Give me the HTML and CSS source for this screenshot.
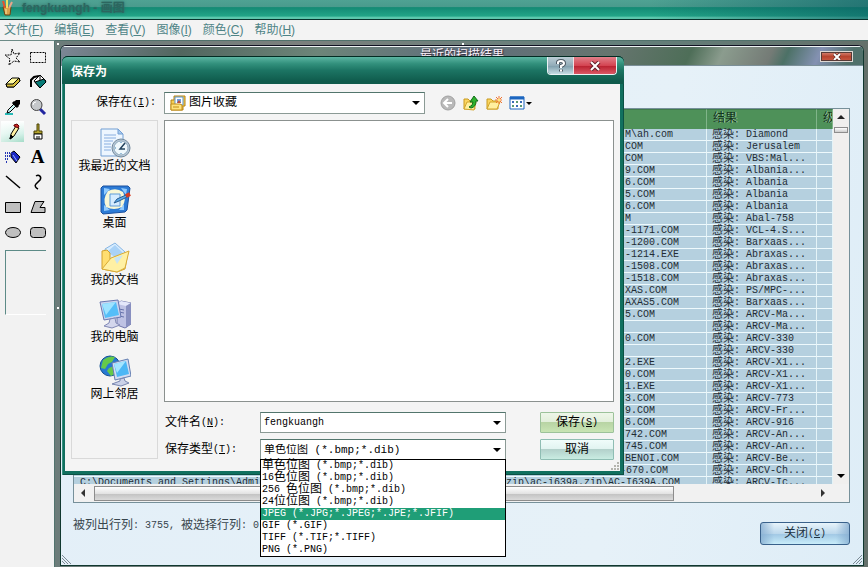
FILE: index.html
```html
<!DOCTYPE html>
<html lang="zh-CN">
<head>
<meta charset="utf-8">
<title>fengkuangh - 画图</title>
<link rel="stylesheet" href="styles.css">
</head>
<body>
<div class="app">
  <header class="app-title">
    <svg width="15" height="16" viewBox="0 0 15 16"><path d="M3 7h8l-1 8H5z" fill="#d9a24a" stroke="#6c4512"/><path d="M5 8L3 1" stroke="#e8502a" stroke-width="2"/><path d="M7 8V0" stroke="#f0e060" stroke-width="2"/><path d="M9 8l3-6" stroke="#e9a58a" stroke-width="2"/><path d="M6 9v5" stroke="#fbe4a0"/></svg>
    <span>fengkuangh - 画图</span>
  </header>
  <nav class="menubar">
    <a href="#">文件(<u>F</u>)</a><a href="#">编辑(<u>E</u>)</a><a href="#">查看(<u>V</u>)</a><a href="#">图像(<u>I</u>)</a><a href="#">颜色(<u>C</u>)</a><a href="#">帮助(<u>H</u>)</a>
  </nav>
  <div class="workspace">
    <aside class="toolbox">
      <div class="tools">
        <button aria-label="任意形状裁剪"><svg viewBox="0 0 18 18"><path d="M8 1l2 5 6-1-4 5 4 4-6-1-5 4 1-6-5-4h6z" fill="none" stroke="#000" stroke-dasharray="2 1"/></svg></button>
        <button aria-label="选定"><svg viewBox="0 0 18 18"><path d="M1.500 4.500h15v10h-15z" fill="none" stroke="#000" stroke-dasharray="2 1"/></svg></button>
        <button aria-label="橡皮"><svg viewBox="0 0 18 18"><path d="M2 11l6-6h7l1 3-6 6H3z" fill="#fff9a0" stroke="#000"/><path d="M2 11h7l6-6 1 3-6 6H3z" fill="#d6bd3c" stroke="#000"/></svg></button>
        <button aria-label="填充"><svg viewBox="0 0 18 18"><path d="M2 14V7l3-3 5-1" fill="none" stroke="#000" stroke-width="2"/><path d="M5 8l6-6 6 6-6 7z" fill="#fff" stroke="#000"/><path d="M6 9l9-3 2 3-6 6z" fill="#087c78" stroke="#000"/><path d="M11 2v5" stroke="#000"/></svg></button>
        <button aria-label="取色"><svg viewBox="0 0 18 18"><path d="M1 16h8" stroke="#26b9b6" stroke-width="2"/><path d="M3 15l1-3 6-6 2 2-6 6z" fill="#c9f4f3" stroke="#000"/><path d="M9 4l5 5M11 7l3-4" stroke="#000" stroke-width="3"/><path d="M12 2h4v4l-2 2-4-4z"/></svg></button>
        <button aria-label="放大镜"><svg viewBox="0 0 18 18"><path d="M11 11l5 5" stroke="#2226a0" stroke-width="3"/><circle cx="7.500" cy="7" r="5.500" fill="#c5c8ca" stroke="#444"/><path d="M4 7q0-3 3-3" fill="none" stroke="#fff"/></svg></button>
        <button class="active" aria-label="铅笔" aria-pressed="true"><svg viewBox="0 0 18 18"><path d="M6 16l1-5 5-8 3 2-5 8z" fill="#fff0a0" stroke="#000"/><path d="M10 2l3-1 2 2-1 2-4-2z" fill="#c72a2a" stroke="#600"/><path d="M6 16l1-4 2 2z" stroke="#000"/></svg></button>
        <button aria-label="刷子"><svg viewBox="0 0 18 18"><path d="M8 1h2v7h3v3H5V8h3z" fill="#b3a32d" stroke="#4a4308"/><path d="M5 11h8v5H5z" fill="#fff" stroke="#000"/><path d="M8 13v3M10 13v3" stroke="#000"/></svg></button>
        <button aria-label="喷枪"><svg viewBox="0 0 18 18"><path d="M7 5l3-2 6 6-4 6-5-6z" fill="#1b28c4" stroke="#000"/><path d="M9 7l4 6" stroke="#9bb4ff"/><path d="M1 5h7M1 8h5M1 11h3M2 14h2" stroke="#2535b4" stroke-width="2" stroke-dasharray="1 1"/></svg></button>
        <button class="letter" aria-label="文字">A</button>
        <button aria-label="直线"><svg viewBox="0 0 18 18"><path d="M2 3l14 12" stroke="#000" stroke-width="1.500"/></svg></button>
        <button aria-label="曲线"><svg viewBox="0 0 18 18"><path d="M7 3c3-2 6 1 4 4L7 11c-2 2 0 4 2 5" fill="none" stroke="#000" stroke-width="1.500"/></svg></button>
        <button aria-label="矩形"><svg viewBox="0 0 18 18"><path d="M1.500 4.500h15v10h-15z" fill="#bfbfbf" stroke="#000"/></svg></button>
        <button aria-label="多边形"><svg viewBox="0 0 18 18"><path d="M6 3.500h9l-4 6h5v5H2z" fill="#bfbfbf" stroke="#000"/></svg></button>
        <button aria-label="椭圆"><svg viewBox="0 0 18 18"><ellipse cx="9" cy="9.500" rx="7.500" ry="5" fill="#bfbfbf" stroke="#000"/></svg></button>
        <button aria-label="圆角矩形"><svg viewBox="0 0 18 18"><rect x="1.500" y="4.500" width="15" height="10" rx="3" fill="#bfbfbf" stroke="#000"/></svg></button>
      </div>
      <div class="tool-options"></div>
    </aside>

    <main class="canvas">
      <i class="handle h-corner"></i><i class="handle h-top"></i><i class="handle h-left"></i>

      <section class="scan">
        <header class="scan-title"><h2>最近的扫描结果</h2><button class="scan-x" aria-label="关闭"><svg width="8" height="8" viewBox="0 0 8 8"><path d="M1 1l6 6M7 1L1 7" stroke="#3b1212" stroke-width="3"/><path d="M1 1l6 6M7 1L1 7" stroke="#fff" stroke-width="2"/></svg></button></header>
        <div class="scan-body">
          <div class="listbox">
            <div class="rows">
              <table>
                <colgroup><col><col class="c-tail"><col class="c-result"><col class="c-level"></colgroup>
                <thead><tr><th colspan="2"></th><th>结果</th><th>级</th></tr></thead>
                <tbody>
                  <tr><td></td><td>M\ah.com</td><td><b>感染</b>: Diamond</td><td></td></tr>
                  <tr><td></td><td>COM</td><td><b>感染</b>: Jerusalem</td><td></td></tr>
                  <tr><td></td><td>COM</td><td><b>感染</b>: VBS:Mal...</td><td></td></tr>
                  <tr><td></td><td>9.COM</td><td><b>感染</b>: Albania...</td><td></td></tr>
                  <tr><td></td><td>6.COM</td><td><b>感染</b>: Albania</td><td></td></tr>
                  <tr><td></td><td>5.COM</td><td><b>感染</b>: Albania</td><td></td></tr>
                  <tr><td></td><td>6.COM</td><td><b>感染</b>: Albania</td><td></td></tr>
                  <tr><td></td><td>M</td><td><b>感染</b>: Abal-758</td><td></td></tr>
                  <tr><td></td><td>-1171.COM</td><td><b>感染</b>: VCL-4.S...</td><td></td></tr>
                  <tr><td></td><td>-1200.COM</td><td><b>感染</b>: Barxaas...</td><td></td></tr>
                  <tr><td></td><td>-1214.EXE</td><td><b>感染</b>: Abraxas...</td><td></td></tr>
                  <tr><td></td><td>-1508.COM</td><td><b>感染</b>: Abraxas...</td><td></td></tr>
                  <tr><td></td><td>-1518.COM</td><td><b>感染</b>: Abraxas...</td><td></td></tr>
                  <tr><td></td><td>XAS.COM</td><td><b>感染</b>: PS/MPC-...</td><td></td></tr>
                  <tr><td></td><td>AXAS5.COM</td><td><b>感染</b>: Barxaas...</td><td></td></tr>
                  <tr><td></td><td>5.COM</td><td><b>感染</b>: ARCV-Ma...</td><td></td></tr>
                  <tr><td></td><td></td><td><b>感染</b>: ARCV-Ma...</td><td></td></tr>
                  <tr><td></td><td>0.COM</td><td><b>感染</b>: ARCV-330</td><td></td></tr>
                  <tr><td></td><td></td><td><b>感染</b>: ARCV-330</td><td></td></tr>
                  <tr><td></td><td>2.EXE</td><td><b>感染</b>: ARCV-X1...</td><td></td></tr>
                  <tr><td></td><td>0.COM</td><td><b>感染</b>: ARCV-X1...</td><td></td></tr>
                  <tr><td></td><td>1.EXE</td><td><b>感染</b>: ARCV-X1...</td><td></td></tr>
                  <tr><td></td><td>3.COM</td><td><b>感染</b>: ARCV-773</td><td></td></tr>
                  <tr><td></td><td>9.COM</td><td><b>感染</b>: ARCV-Fr...</td><td></td></tr>
                  <tr><td></td><td>6.COM</td><td><b>感染</b>: ARCV-916</td><td></td></tr>
                  <tr><td></td><td>742.COM</td><td><b>感染</b>: ARCV-An...</td><td></td></tr>
                  <tr><td></td><td>745.COM</td><td><b>感染</b>: ARCV-An...</td><td></td></tr>
                  <tr><td></td><td>BENOI.COM</td><td><b>感染</b>: ARCV-Be...</td><td></td></tr>
                  <tr><td colspan="2">C:\Documents and Settings\Administrator\My Documents\samples\virus\arc\zip\ac-670.zip\ARCV-670.COM</td><td><b>感染</b>: ARCV-Ch...</td><td></td></tr>
                  <tr><td colspan="2">C:\Documents and Settings\Administrator\My Documents\samples\virus\arc\zip\ac-i639a.zip\AC-I639A.COM</td><td><b>感染</b>: ARCV-Ic...</td><td></td></tr>
                </tbody>
              </table>
            </div>
            <div class="vbar"><i class="arrow up"></i><i class="vthumb"></i><i class="arrow down"></i></div>
            <div class="hbar"><i class="arrow left"></i><i class="hthumb"></i><i class="arrow right"></i></div>
          </div>
          <footer class="scan-foot">
            <p class="mono"><b>被列出行列</b>: 3755, <b>被选择行列</b>: 0</p>
            <button class="mono close"><b>关闭</b>(<u>C</u>)</button>
          </footer>
        </div>
        <svg class="grip g-left" viewBox="0 0 10 10"><path d="M0 1l9 9M0 4l6 6M0 7l3 3" stroke="#7b8a94"/></svg>
        <svg class="grip g-right" viewBox="0 0 10 10"><path d="M10 1L1 10M10 4l-6 6M10 7l-3 3" stroke="#7b8a94"/></svg>
      </section>

      <section class="dialog" role="dialog" aria-labelledby="dlg-title">
        <header class="dlg-title">
          <h1 id="dlg-title">保存为</h1>
          <div class="caption">
            <button class="help" aria-label="帮助"><svg width="12" height="14" viewBox="0 0 12 14"><path d="M3 5V3.500Q3 2 6 2t3 2.500Q9 6 6 7v2M6 10.500v2" fill="none" stroke="#4d5963" stroke-width="4"/><path d="M3 5V3.500Q3 2 6 2t3 2.500Q9 6 6 7v2M6 10.500v2" fill="none" stroke="#fff" stroke-width="2"/></svg></button>
            <button class="x" aria-label="关闭"><svg width="12" height="10" viewBox="0 0 12 10"><path d="M2 1l8 8M10 1L2 9" stroke="#642029" stroke-width="4"/><path d="M2 1l8 8M10 1L2 9" stroke="#fff" stroke-width="2"/></svg></button>
          </div>
        </header>
        <div class="dlg-body">
          <div class="lookin">
            <label class="mono" for="look"><b>保存在</b>(<u>I</u>):</label>
            <div class="field look">
              <svg width="16" height="16" viewBox="0 0 16 16"><path d="M1 5h3V1h11v10h-2v4H1z" fill="#f5ce54" stroke="#b68213"/><path d="M5 2h8v8H5z" fill="#fff" stroke="#5a93cc"/><path d="M7 4h4v4H7z" fill="#6d9de0"/><path d="M7 8l2-3 2 3z" fill="#c04a31"/><path d="M1 9h9l2 1v5H1z" fill="#ffe37c" stroke="#c08c18"/><path d="M3 12h6" stroke="#c08c18"/></svg>
              <select id="look"><option>图片收藏</option></select><i class="arrow down"></i>
            </div>
            <div class="nav-tools">
              <button aria-label="后退"><svg width="16" height="16" viewBox="0 0 16 16"><circle cx="8" cy="8" r="7" fill="#b9b9b9" stroke="#a1a1a1"/><path d="M12 8H5M8 4L4 8l4 4" fill="none" stroke="#fff" stroke-width="2"/></svg></button>
              <button aria-label="向上一级"><svg width="16" height="16" viewBox="0 0 16 16"><path d="M1 14V4h4l2 2h4l1 8z" fill="#fbd561" stroke="#c89a1e"/><path d="M1 14l3-7h9l-2 8z" fill="#fff0a0" stroke="#d2a52b"/><path d="M6 12q4-1 4-5H7l4-6 4 5h-2q0 6-5 7z" fill="#2eb32e" stroke="#116d16"/></svg></button>
              <button aria-label="新建文件夹"><svg width="16" height="16" viewBox="0 0 16 16"><path d="M1 14V4h4l2 2h5v8z" fill="#fbd561" stroke="#c89a1e"/><path d="M1 14l3-7h10l-3 7z" fill="#fff0a0" stroke="#d2a52b"/><path d="M13 1v8M9 5h7M10 2l6 6M16 2l-6 6" stroke="#f17232"/><circle cx="13" cy="5" r="1.500" fill="#ffe47b"/></svg></button>
              <button class="view" aria-label="查看"><svg width="16" height="16" viewBox="0 0 16 16"><path d="M1 2h14v12H1z" fill="#fff" stroke="#1c66c0"/><path d="M1 3h14" stroke="#1c66c0" stroke-width="3"/><path d="M3 7h2M11 7h2M7 11h2" stroke="#3a6bb5" stroke-width="2"/><path d="M7 7h2M3 11h2M11 11h2" stroke="#5a9a70" stroke-width="2"/></svg><i class="arrow down small"></i></button>
            </div>
          </div>
          <div class="dlg-main">
            <nav class="places">
              <a href="#"><svg viewBox="0 0 32 32"><path d="M2 2h17l5 5v22H2z" fill="#edf6ff" stroke="#739fd4"/><path d="M19 2v5h5z" fill="#a9caef" stroke="#739fd4"/><path d="M5 8h12M5 11h12M5 14h9M5 17h7M5 20h7M5 23h7" stroke="#88aee0"/><circle cx="22" cy="21" r="9" fill="#b8c8d6" stroke="#71899d"/><circle cx="22" cy="21" r="7" fill="#eff8fc" stroke="#8fa9bd"/><path d="M26 16l-5 6h5" fill="none" stroke="#24445e" stroke-width="1.500"/><path d="M22 15v1M22 26v1M16 21h1" stroke="#3c83b6"/></svg>我最近的文档</a>
              <a href="#"><svg viewBox="0 0 32 32"><path d="M4 2h25l2 2-3 22-2 2-22 2-2-2V4z" fill="#2c7bd6" stroke="#1b519f"/><path d="M5 4l6 1-6 6zM22 4l6 1-1 6zM5 21l6 5-6 1zM20 26l5-6v6z" fill="#91cbff"/><path d="M9 7q8-4 15 1 4 8-1 15-8 4-16 0-4-8 2-16z" fill="#f8f7d7"/><path d="M11 10h10v12H11z" fill="#d5ecff" stroke="#5f9bd8"/><path d="M15 19l3-4 9-4 1 2-8 4z" fill="#5eabe8" stroke="#285c91"/><path d="M27 12l4-2" stroke="#d73b22" stroke-width="4"/></svg>桌面</a>
              <a href="#"><svg viewBox="0 0 32 32"><path d="M6 8l10-6 10 9-6 13-12-2z" fill="#d7ecff" stroke="#86b5e3"/><path d="M16 4l8 8-8 4-8-5z" fill="#a9d2f7"/><path d="M3 28V10l5-1 3 3v6l18-7-3 17-8 3z" fill="#ffde70" stroke="#d1a02e"/><path d="M3 28l9-11 18-7-4 17-8 4z" fill="#fff0a3" stroke="#d8ab38"/><path d="M15 17l9-3-6 9z" fill="#c8e4f4"/></svg>我的文档</a>
              <a href="#"><svg viewBox="0 0 32 32"><path d="M18 6l4-3 10 2v21l-6 4-8-3z" fill="#bec2e4" stroke="#7278ac"/><path d="M22 3l10 2-5 3-9-2z" fill="#e4e7fa"/><path d="M27 8l5-3v21l-5 4z" fill="#888fc0"/><path d="M20 11l5 1M20 14l5 1M20 18l5 1" stroke="#6672aa"/><path d="M1 4l18-2 3 17-17 3z" fill="#cbd4ee" stroke="#6876b0"/><path d="M3 6l14-2 3 13-14 3z" fill="#55bef8"/><path d="M3 6l14-2-10 13z" fill="#9de3ff"/><path d="M11 21l5-1 1 5 4 2-8 3-8-2 5-3z" fill="#d3d6ec" stroke="#8289b6"/></svg>我的电脑</a>
              <a href="#"><svg viewBox="0 0 32 32"><circle cx="11" cy="11" r="10" fill="#2679d2" stroke="#155291"/><path d="M4 5q6-5 12-3l-3 5-4 2-3 5-4-1zM10 13l7-3 2 7-7 4-4-5z" fill="#65c94a"/><path d="M13 8l16-4 3 17-16 4z" fill="#d3dcf1" stroke="#647eb1"/><path d="M15 9l12-3 3 13-12 3z" fill="#4cb7f5"/><path d="M15 9l12-3-9 12z" fill="#a4e5ff"/><path d="M21 24l4-1 1 3 4 2-8 3-9-2 8-3z" fill="#cbd2e9" stroke="#7987b0"/></svg>网上邻居</a>
            </nav>
            <div class="dlg-right">
              <div class="files"></div>
              <form class="save-form" onsubmit="return false">
                <label class="mono" for="fname"><b>文件名</b>(<u>N</u>):</label>
                <div class="field"><input id="fname" type="text" value="fengkuangh"><i class="arrow down"></i></div>
                <button class="mono btn primary"><b>保存</b>(<u>S</u>)</button>
                <label class="mono" for="ftype"><b>保存类型</b>(<u>T</u>):</label>
                <div class="field type-field">
                  <select id="ftype"><option>单色位图 (*.bmp;*.dib)</option></select><i class="arrow down"></i>
                  <ul class="mono options" role="listbox" aria-label="保存类型">
                    <li role="option"><b>单色位图</b> (*.bmp;*.dib)</li>
                    <li role="option">16<b>色位图</b> (*.bmp;*.dib)</li>
                    <li role="option">256 <b>色位图</b> (*.bmp;*.dib)</li>
                    <li role="option">24<b>位位图</b> (*.bmp;*.dib)</li>
                    <li role="option" aria-selected="true">JPEG (*.JPG;*.JPEG;*.JPE;*.JFIF)</li>
                    <li role="option">GIF (*.GIF)</li>
                    <li role="option">TIFF (*.TIF;*.TIFF)</li>
                    <li role="option">PNG (*.PNG)</li>
                  </ul>
                </div>
                <button class="mono btn" type="button"><b>取消</b></button>
              </form>
            </div>
          </div>
        </div>
        <svg class="grip dlg-grip" viewBox="0 0 10 10"><path d="M8 1v2M8 4v2M5 4v2M8 7v2M5 7v2M2 7v2" stroke="#b4b4ae" stroke-width="2"/></svg>
      </section>
    </main>
  </div>
</div>
</body>
</html>
```
FILE: styles.css
```css
* { box-sizing: border-box; }
body { margin: 0; font: 12px/16px "Liberation Sans", "Noto Sans CJK SC", sans-serif; color: #000; }
h1, h2, p, ul { margin: 0; padding: 0; }
button { margin: 0; padding: 0; border: 0; background: none; font: inherit; color: inherit; }
svg { display: block; }
a { color: inherit; text-decoration: none; }

/* Latin runs at a six-pixel advance beside larger Chinese glyphs */
.mono, table, input, select { font-family: "Liberation Mono", "Noto Sans CJK SC", monospace; }
.mono, table { font-size: 10px; }
.mono b, table b { font-size: 12px; line-height: 0; font-weight: normal; vertical-align: -1px; }
table b { font-size: 11px; }

.app { height: 100vh; display: flex; flex-direction: column; overflow: hidden; }
.app-title { flex: none; height: 20px; display: flex; align-items: center; gap: 7px; padding-bottom: 4px; color: #2c665f; font-size: 12px; font-weight: bold; border-bottom: 1px solid #07332c;
  background: linear-gradient(#4fa293 0, #4a9b8d 35%, #148a74 40%, #22a587 85%, #5cc7ac 90%); position: relative; }
.app-title::after { content: ""; position: absolute; inset: 0; background: linear-gradient(90deg, #0a5b6200 75%, #0a5b6299); }
.app-title span { text-shadow: 0 0 3px #2c665f; }
.menubar { flex: none; height: 20px; display: flex; gap: 11px; padding: 1px 4px; background: #f3f3f3; color: #4e8486; line-height: 18px; }

.workspace { flex: 1; min-height: 0; display: flex; }
.toolbox { flex: none; width: 55px; padding: 3px 0 0; background: #f2f2f2; border-top: 1px solid #6d8b87; border-right: 1px solid #51736e; }
.tools { display: grid; grid-template-columns: 25px 25px; grid-auto-rows: 25px; }
.tools button { display: grid; place-items: center; }
.tools svg { width: 18px; height: 18px; }
.tools .active { margin: 2px 1px; background: linear-gradient(90deg, #fff8, #fff0), linear-gradient(#fff, #d4f1e8 60%, #a4dcc8); }
.tools .letter { font: bold 19px/20px "Liberation Serif", serif; }
.tool-options { width: 41px; height: 65px; margin: 6px 0 0 5px; border-top: 1px solid #5d8b87; border-left: 1px solid #5d8b87; border-bottom: 1px solid #fff; }

.canvas { flex: 1; min-width: 0; position: relative; background: linear-gradient(90deg, #6c7c7a, #7b807d 30%, #64807b 70%, #64706a); border-top: 1px solid #50716b; }
.handle { position: absolute; width: 2px; height: 2px; background: #fff; }
.h-corner { left: 2px; top: 2px; }
.h-top { left: 50%; top: 2px; }
.h-left { left: 2px; top: 266px; }

.scan { position: absolute; inset: 4px 4px 1px 5px; display: flex; flex-direction: column; border: 1px solid #10382f; border-top-color: #112; border-radius: 6px 6px 0 0; background: #e4f0f8; box-shadow: inset 0 0 0 1px #b8e5e2; overflow: hidden; }
.scan-title { flex: none; height: 20px; display: flex; align-items: flex-start; justify-content: center; position: relative; color: #f7eef7; border-top: 1px solid #eef3f3; border-bottom: 1px solid #7b8f98;
  background: linear-gradient(115deg, #7c8795 0, #52665f 15%, #6d8579 32%, #606e7b 50%, #66756f 68%, #4e6e58 78%, #8b9c8e 82%, #747b76 88%, #4c7166 90%, #8491b2 94%, #50716b 98%); }
.scan-title h2 { font-size: 12px; line-height: 16px; font-weight: normal; text-shadow: 1px 1px 1px #302334; }
.scan-x { position: absolute; right: 10px; top: 4px; width: 33px; height: 11px; display: grid; place-items: center; border: 1px solid #ded8d3; background: linear-gradient(#d98a79, #b7432e 50%, #c95a43); outline: 1px solid #573a36; outline-offset: -2px; }
.scan-body { flex: 1; min-height: 0; display: flex; flex-direction: column; padding: 42px 13px 0 12px; background: linear-gradient(100deg, #e3eff8, #e6f1f8 70%, #deedf7); }
.listbox { flex: none; height: 395px; display: grid; grid-template: 375px 18px / minmax(0, 1fr) 16px; border: 1px solid #76909a; background: #f1f1f1; }
.rows { overflow: hidden; background: #b5d0df; }
table { width: 100%; table-layout: fixed; border-collapse: separate; border-spacing: 0; color: #1f2c34; line-height: 11px; }
.c-tail { width: 82px; }
.c-result { width: 110px; }
.c-level { width: 16px; }
th, td { padding: 0; text-align: left; white-space: pre; }
th { height: 20px; padding-left: 6px; overflow: hidden; font-size: 12px; font-weight: normal; color: #12351b; text-shadow: 1px 0 #aacfac; background: #4e9159; border-right: 1px solid #80b58a; border-top: 1px solid #417b4c; }
td { height: 12px; border-bottom: 1px solid #eef9fc; border-right: 1px solid #e4f3f7; }
td:first-child { padding-left: 6px; border-right: 0; }
td:first-child[colspan] { border-right: 1px solid #e4f3f7; }
td:nth-child(3), td[colspan] + td { padding-left: 5px; }

.arrow { width: 0; height: 0; border: 4px solid transparent; flex: none; }
.arrow.small { border-width: 3px; }
.arrow.down { border-top-color: #000; border-bottom: 0; }
.arrow.up { border-bottom-color: #222; border-top: 0; }
.arrow.left { border-right-color: #333; border-left: 0; }
.arrow.right { border-left-color: #333; border-right: 0; }
.vbar { display: flex; flex-direction: column; align-items: center; padding: 6px 0; background: #f0efee; }
.vthumb { width: 14px; height: 6px; margin: 8px 0 auto; border: 1px solid #8d8d8d; background: linear-gradient(#fff, #ccc); }
.hbar { grid-column: 1 / 3; display: flex; align-items: center; padding: 0 24px 0 7px; background: #f1f1f1; }
.hthumb { width: 580px; height: 15px; margin: 0 auto 0 9px; border: 1px solid #8d8d8d; background: linear-gradient(#fff, #e3e3e3 50%, #c3c3c3 55%, #dadada); }
.scan-foot { display: flex; align-items: flex-start; justify-content: space-between; padding-top: 15px; color: #38454c; }
.scan-foot p { white-space: pre; }
.close { width: 90px; height: 23px; margin-top: 4px; border: 1px solid #39618b; border-radius: 3px; color: #203140; background: linear-gradient(90deg, #86add0cc, #d5e9f600 15%, #d5e9f600 85%, #86add0cc), linear-gradient(#e8f4fb, #bcd8ec 50%, #a2c9e5 55%, #c9edfa); }
.grip { position: absolute; bottom: 1px; width: 10px; height: 10px; }
.g-left { left: 1px; }
.g-right { right: 1px; }

.dialog { position: absolute; left: 7px; top: 15px; width: 562px; padding: 0 4px 4px 3px; border-radius: 6px 6px 0 0; background: #11705f; box-shadow: inset 0 1px #093c34, inset 1px 0 #35917f, inset -1px -1px #0b5144; }
.dlg-title { height: 28px; margin: 0 -4px 0 -3px; display: flex; align-items: flex-start; justify-content: space-between; padding: 0 7px 0 9px; border-top: 1px solid #022c23; border-radius: 6px 6px 0 0; background: linear-gradient(#5cb5a2 0, #32907c 25%, #1c7463 50%, #0f5b4c 90%); color: #fff; }
.dlg-title h1 { font-size: 12px; line-height: 30px; }
.caption { display: flex; height: 18px; border: 1px solid #eaf3f5; border-top: 0; border-radius: 0 0 4px 4px; overflow: hidden; }
.caption button { display: grid; place-items: center; }
.help { width: 25px; background: linear-gradient(#bccdd5, #92acb8 50%, #7f9eac 52%, #c5dce3); }
.caption .x { width: 43px; border-left: 1px solid #f2dfe2; background: linear-gradient(#e1808a, #d44452 50%, #b9202f 52%, #db5865); }
.dlg-body { padding: 8px 6px 11px; background: #f4f4f4; }
.lookin { display: flex; align-items: center; height: 22px; margin-bottom: 6px; }
.lookin label { width: 93px; padding-right: 8px; text-align: right; }
.field { position: relative; display: flex; align-items: center; height: 21px; padding-right: 4px; border: 1px solid #8b9a95; border-top-color: #52756c; background: #fff; }
.look { width: 261px; height: 22px; padding-left: 5px; }
.field input, .field select { flex: 1; min-width: 0; width: 100%; height: 100%; margin: 0; padding: 0 3px; border: 0; outline: 0; background: none; color: #000; appearance: none; font-size: 10px; }
.field #look { font-size: 12px; }
.field #ftype { font-size: 11px; }
.nav-tools { display: flex; gap: 7px; padding-left: 15px; }
.view { display: flex; align-items: center; gap: 1px; }
.dlg-main { display: flex; gap: 6px; }
.places { flex: none; width: 87px; height: 339px; padding-top: 6px; display: flex; flex-direction: column; border: 1px solid #d9d9d9; }
.places a { height: 57px; display: flex; flex-direction: column; align-items: center; line-height: 14px; white-space: nowrap; }
.places svg { width: 32px; height: 32px; flex: none; }
.dlg-right { flex: 1; min-width: 0; }
.files { height: 282px; background: #fff; border: 1px solid #8b918f; }
.save-form { display: grid; grid-template-columns: 96px 246px 1fr 74px; row-gap: 6px; margin-top: 10px; align-items: center; }
.save-form label { padding-left: 1px; }
.save-form .btn { grid-column: 4; }
.btn { height: 21px; border: 1px solid #8fbdb3; border-radius: 1px; background: linear-gradient(#f0fcfa, #e2f4f1 45%, #b3d1cb 50%, #c9ece2); }
.primary { background: linear-gradient(#eef6e9, #e2efdb 45%, #b8d4a4 50%, #c8e4b4); border-color: #9cc29a; }
.options { position: absolute; left: -1px; right: -1px; top: 19px; list-style: none; border: 1px solid #000; background: #fff; z-index: 1; }
.options li { height: 12px; line-height: 12px; padding-left: 1px; white-space: pre; }
.options [aria-selected] { background: #1f9e77; color: #fff; }
.dlg-grip { right: 4px; bottom: 4px; }
```
